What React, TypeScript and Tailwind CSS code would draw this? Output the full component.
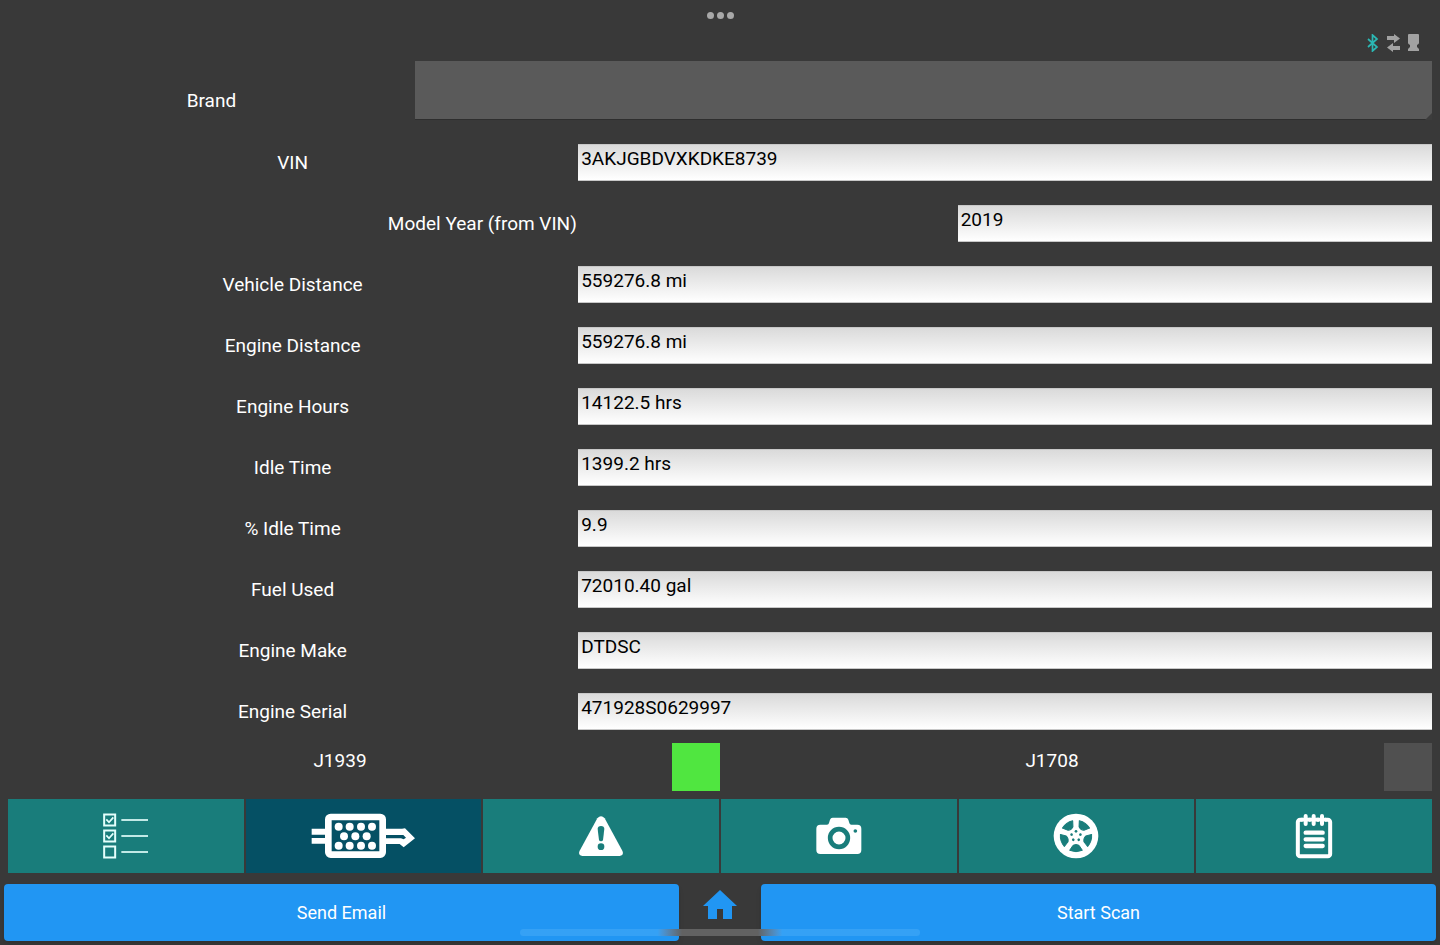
import { useState } from "react"
import type { ReactNode } from "react"
import clsx from "clsx"

interface Field {
  id: string
  label: string
  value: string
  narrow?: boolean
}

const fields: Field[] = [
  { id: "vin", label: "VIN", value: "3AKJGBDVXKDKE8739" },
  { id: "model-year", label: "Model Year (from VIN)", value: "2019", narrow: true },
  { id: "vehicle-distance", label: "Vehicle Distance", value: "559276.8 mi" },
  { id: "engine-distance", label: "Engine Distance", value: "559276.8 mi" },
  { id: "engine-hours", label: "Engine Hours", value: "14122.5 hrs" },
  { id: "idle-time", label: "Idle Time", value: "1399.2 hrs" },
  { id: "idle-percent", label: "% Idle Time", value: "9.9" },
  { id: "fuel-used", label: "Fuel Used", value: "72010.40 gal" },
  { id: "engine-make", label: "Engine Make", value: "DTDSC" },
  { id: "engine-serial", label: "Engine Serial", value: "471928S0629997" },
]

function ChecklistIcon() {
  return (
    <svg width="46" height="46" viewBox="39 55 138 138" fill="none" stroke="#e4fffc">
      {[57, 105, 153].map((y) => (
        <g key={y}>
          <rect x="42.5" y={y + 2.5} width="33" height="33" strokeWidth="6" />
          <path d={`M94 ${y + 19}h80`} strokeWidth="5" />
          {y < 150 && <path d={`M49 ${y + 17}l8 9 13-15`} strokeWidth="5" />}
        </g>
      ))}
    </svg>
  )
}

function FilterIcon() {
  const rows = [
    { y: 96, xs: [117, 150, 184, 217] },
    { y: 125, xs: [133, 167, 201] },
    { y: 153, xs: [117, 150, 184, 217] },
  ]
  return (
    <svg width="104" height="46" viewBox="34 55 312 138" fill="white">
      <path d="M36 102h44v18H36zM36 130h44v17H36z" />
      <rect x="86" y="67" width="163" height="113" rx="7" fill="none" stroke="white" strokeWidth="20" />
      {rows.map((row) => row.xs.map((x) => <circle key={`${x}-${row.y}`} cx={x} cy={row.y} r="12" />))}
      <path d="M256 102h51l9-1 30 30-34 27-12-10h-44v-17h48l8 3 7-5-8-8h-55z" />
    </svg>
  )
}

function WarningIcon() {
  return (
    <svg width="46" height="42" viewBox="54 59 138 126">
      <path d="M112 69q11-13 22 0l53 97q6 13-8 16H67q-14-3-8-16z" fill="white" />
      <path d="M113 101q0-9 10-9t10 9l-4 33q-1 4-6 4t-6-4z" fill="#197d7b" />
      <circle cx="123" cy="154" r="10" fill="#197d7b" />
    </svg>
  )
}

function CameraIcon() {
  return (
    <svg width="46" height="38" viewBox="77 67 138 114">
      <path
        d="M90 90h20q5 0 6-5l3-10q2-6 8-6h39q6 0 8 6l3 10q1 5 6 5h18q12 0 12 12v64q0 12-12 12H90q-12 0-12-12v-64q0-12 12-12z"
        fill="white"
      />
      <circle cx="146" cy="130" r="26.5" fill="none" stroke="#197d7b" strokeWidth="14" />
      <circle cx="195" cy="109" r="5.5" fill="#197d7b" />
    </svg>
  )
}

function WheelIcon() {
  const spokes = [0, 72, 144, 216, 288]
  return (
    <svg width="46" height="46" viewBox="-69 -69 138 138">
      <circle r="67" fill="white" />
      <g fill="#197d7b">
        {spokes.map((angle) => (
          <g key={angle} transform={`rotate(${angle})`}>
            <path d="M-19 43Q0 51 19 43L9 28Q0 23-9 28z" stroke="#197d7b" strokeWidth="3" strokeLinejoin="round" />
            <circle cy="-14" r="4" />
          </g>
        ))}
      </g>
    </svg>
  )
}

function NotesIcon() {
  return (
    <svg width="38" height="46" viewBox="76 54 114 138" fill="none" stroke="white" strokeLinecap="round">
      <rect x="84.5" y="74" width="97" height="110" rx="7" strokeWidth="12" />
      <path d="M108 63v24M132 63v24M157 63v24" stroke="#197d7b" strokeWidth="18" strokeLinecap="butt" />
      <path d="M96 74h72" strokeWidth="11" />
      <path d="M108 63v24M132 63v24M157 63v24" strokeWidth="12" />
      <path d="M108 113h51M108 133h51M108 153h51" strokeWidth="13" />
    </svg>
  )
}

function BluetoothIcon() {
  return (
    <svg width="12" height="18" viewBox="0 0 12 18" fill="none" stroke="#2bb8b4" strokeWidth="1.7">
      <path d="M1 5l9 8-4.5 4V1L10 5l-9 8" />
    </svg>
  )
}

function TransferIcon() {
  return (
    <svg width="13" height="18" viewBox="0 0 13 18" fill="#a2a2a2">
      <path d="M0 2h7V0l6 4.500L7 9V6H0zM13 12H6V9l-6 4.500L6 18v-2h7z" />
    </svg>
  )
}

function PlugIcon() {
  return (
    <svg width="11" height="18" viewBox="0 0 11 18" fill="#a2a2a2">
      <path d="M0 1q0-1 1-1h9q1 0 1 1v8q0 1-2 2v2l2 2v2H0v-2l2-2v-2q-2-1-2-2z" />
    </svg>
  )
}

function HomeIcon() {
  return (
    <svg width="34" height="30" viewBox="0 0 34 30" fill="#2196f3">
      <path d="M17 0l17 16h-5v13h-9V19h-6v10H5V16H0z" />
    </svg>
  )
}

const tabs: { name: string; icon: ReactNode }[] = [
  { name: "Checklist", icon: <ChecklistIcon /> },
  { name: "Aftertreatment", icon: <FilterIcon /> },
  { name: "Faults", icon: <WarningIcon /> },
  { name: "Photos", icon: <CameraIcon /> },
  { name: "Wheels", icon: <WheelIcon /> },
  { name: "Notes", icon: <NotesIcon /> },
]

function FieldRow({ field }: { field: Field }) {
  return (
    <div className={clsx("grid items-center gap-px", field.narrow ? "grid-cols-[2fr_1fr]" : "grid-cols-[2fr_3fr]")}>
      <label htmlFor={field.id} className="text-center">
        {field.label}
      </label>
      <input
        id={field.id}
        type="text"
        defaultValue={field.value}
        className="h-[37px] w-full min-w-0 border-y border-[#c8c8c8] bg-linear-to-b from-[#dadada] to-white px-[3px] pb-2 text-black outline-none"
      />
    </div>
  )
}

function Protocol({ name, active }: { name: string; active?: boolean }) {
  return (
    <div className="flex">
      <span className="grow pt-1.5 text-center">{name}</span>
      <span className={clsx("size-12", active ? "bg-[#50e640]" : "bg-[#505050]")}></span>
    </div>
  )
}

export default function App() {
  const [activeTab, setActiveTab] = useState("Aftertreatment")

  return (
    <div className="relative flex min-h-screen flex-col bg-[#393939] font-[Roboto,sans-serif] text-[19px] leading-6 text-white">
      <header>
        <div className="flex justify-center gap-[3px] pt-3">
          <span className="size-[7px] rounded-full bg-[#a8a8a8]"></span>
          <span className="size-[7px] rounded-full bg-[#a8a8a8]"></span>
          <span className="size-[7px] rounded-full bg-[#a8a8a8]"></span>
        </div>
        <div className="flex justify-end gap-2 pt-[15px] pr-[21px]">
          <BluetoothIcon />
          <TransferIcon />
          <PlugIcon />
        </div>
      </header>

      <main className="flex flex-col px-2 pt-[9px]">
        <div className="grid grid-cols-[2fr_5fr]">
          <label htmlFor="brand" className="pt-7 text-center">
            Brand
          </label>
          <div className="relative">
            <select
              id="brand"
              className="block h-[59px] w-full appearance-none border-b border-[#2e2e2e] bg-[#5a5a5a] px-2 outline-none"
            ></select>
            <svg width="7" height="7" viewBox="0 0 7 7" className="pointer-events-none absolute right-0 bottom-0">
              <path d="M7 0v7H0z" fill="#3c3c3c" />
            </svg>
          </div>
        </div>

        <div className="flex flex-col gap-6 pt-6">
          {fields.map((field) => (
            <FieldRow key={field.id} field={field} />
          ))}
        </div>

        <div className="grid grid-cols-2 pt-[13px]">
          <Protocol name="J1939" active />
          <Protocol name="J1708" />
        </div>

        <nav className="grid grid-cols-6 gap-0.5 pt-2">
          {tabs.map((tab) => (
            <button
              key={tab.name}
              type="button"
              aria-label={tab.name}
              onClick={() => setActiveTab(tab.name)}
              className={clsx(
                "flex h-[74px] items-center justify-center",
                activeTab === tab.name ? "bg-[#055064]" : "bg-[#197d7b]",
              )}
            >
              {tab.icon}
            </button>
          ))}
        </nav>
      </main>

      <footer className="flex gap-1 px-1 pt-[11px] pb-1 text-lg">
        <button type="button" className="h-[57px] flex-1 rounded bg-[#2196f3] shadow-md">
          Send Email
        </button>
        <a href="#home" aria-label="Home" className="flex w-[74px] justify-center pt-1.5">
          <HomeIcon />
        </a>
        <button type="button" className="h-[57px] flex-1 rounded bg-[#2196f3] shadow-md">
          Start Scan
        </button>
      </footer>

      {/* System home indicator */}
      <div className="pointer-events-none absolute bottom-[9px] left-1/2 flex h-[7px] w-[400px] -translate-x-1/2 overflow-hidden rounded-full">
        <span className="flex-1 bg-linear-to-r from-[#35a1f5] from-85% to-[#626262]"></span>
        <span className="w-[76px] bg-[#626262]"></span>
        <span className="flex-1 bg-linear-to-l from-[#35a1f5] from-85% to-[#626262]"></span>
      </div>
    </div>
  )
}
